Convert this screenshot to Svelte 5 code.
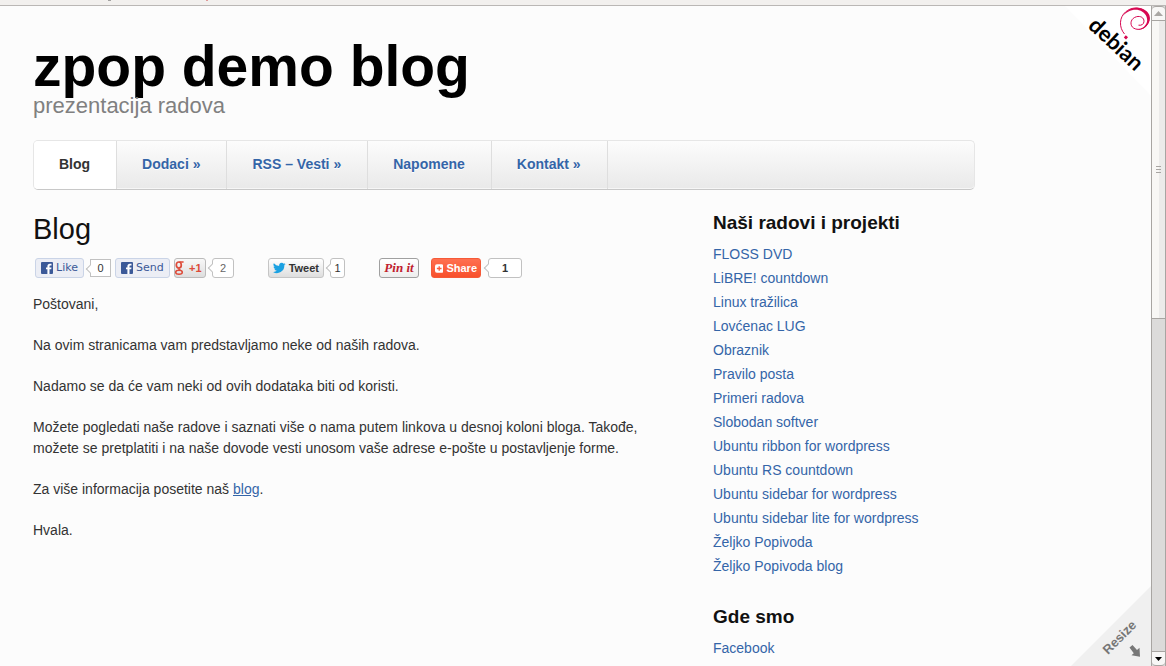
<script>
  const menu = [
    { label: 'Blog', current: true },
    { label: 'Dodaci »' },
    { label: 'RSS – Vesti »' },
    { label: 'Napomene' },
    { label: 'Kontakt »' }
  ];

  const projects = [
    'FLOSS DVD',
    'LiBRE! countdown',
    'Linux tražilica',
    'Lovćenac LUG',
    'Obraznik',
    'Pravilo posta',
    'Primeri radova',
    'Slobodan softver',
    'Ubuntu ribbon for wordpress',
    'Ubuntu RS countdown',
    'Ubuntu sidebar for wordpress',
    'Ubuntu sidebar lite for wordpress',
    'Željko Popivoda',
    'Željko Popivoda blog'
  ];
</script>

{#snippet facebook()}
  <svg width="12" height="12" viewBox="0 0 12 12" aria-hidden="true">
    <rect width="12" height="12" rx="1" fill="#3b5998" />
    <path d="M6.4 12V7.3H5V5.4h1.4V4.2C6.4 2.6 7.3 1.7 8.9 1.7h1.6v1.8H9.4c-.7 0-.9.3-.9.9v1h2l-.3 1.9H8.5V12z" fill="#fff" />
  </svg>
{/snippet}

<div class="window">
  <div class="toolbar">
    <svg width="210" height="5" aria-hidden="true">
      <path d="M108 0h3" stroke="#555" />
      <path d="M206 0h2" stroke="#c44" />
    </svg>
  </div>

  <div class="view">
    <div class="page">
      <div class="container">
        <header>
          <h1>zpop demo blog</h1>
          <p class="tagline">prezentacija radova</p>
        </header>

        <nav>
          {#each menu as item}
            <a href="#top" class:current={item.current}>{item.label}</a>
          {/each}
        </nav>

        <div class="columns">
          <main>
            <h2>Blog</h2>

            <div class="share">
              <div class="group">
                <button class="fb like">{@render facebook()}Like</button>
                <span class="count square">0</span>
              </div>
              <button class="fb send">{@render facebook()}Send</button>
              <div class="group plus-group">
                <button class="plus">
                  <svg width="10" height="16" viewBox="0 0 10 16" fill="none" stroke="#dd4b39" aria-hidden="true">
                    <ellipse cx="3.8" cy="5" rx="2.5" ry="3" stroke-width="1.7" />
                    <path d="M4.4 2h4.2M4.6 8C3 9 4 9.6 5.6 10.4" stroke-width="1.3" />
                    <ellipse cx="4" cy="12.2" rx="3.3" ry="2" stroke-width="1.5" />
                  </svg>
                  +1
                </button>
                <span class="count wide">2</span>
              </div>
              <div class="group tweet-group">
                <button class="tweet">
                  <svg width="14" height="12" viewBox="0 0 24 20" aria-hidden="true">
                    <path d="M24 2.4a10 10 0 0 1-2.8.8A5 5 0 0 0 23.3.5a10 10 0 0 1-3.1 1.2A4.9 4.9 0 0 0 11.8 6.2 14 14 0 0 1 1.7 1a4.9 4.9 0 0 0 1.5 6.6A5 5 0 0 1 1 7a4.9 4.9 0 0 0 3.9 4.9 5 5 0 0 1-2.2.1 4.9 4.9 0 0 0 4.6 3.4A9.9 9.9 0 0 1 0 17.5 14 14 0 0 0 21.5 5 10 10 0 0 0 24 2.4z" fill="#1ba1e2" />
                  </svg>
                  Tweet
                </button>
                <span class="count">1</span>
              </div>
              <button class="pin">Pin it</button>
              <div class="group share-group">
                <button class="addthis">
                  <svg width="9" height="9" viewBox="0 0 9 9" aria-hidden="true">
                    <rect width="9" height="9" rx="2" fill="#fff" />
                    <path d="M4.5 2v5M2 4.5h5" stroke="#fc5a3c" stroke-width="1.4" />
                  </svg>
                  Share
                </button>
                <span class="count total">1</span>
              </div>
            </div>

            <div class="entry">
              <p>Poštovani,</p>
              <p>Na ovim stranicama vam predstavljamo neke od naših radova.</p>
              <p>Nadamo se da će vam neki od ovih dodataka biti od koristi.</p>
              <p>
                Možete pogledati naše radove i saznati više o nama putem linkova u desnoj koloni bloga. Takođe,
                možete se pretplatiti i na naše dovode vesti unosom vaše adrese e-pošte u postavljenje forme.
              </p>
              <p>Za više informacija posetite naš <a href="#blog">blog</a>.</p>
              <p>Hvala.</p>
            </div>
          </main>

          <aside>
            <section>
              <h3>Naši radovi i projekti</h3>
              <ul>
                {#each projects as name}
                  <li><a href="#projekti">{name}</a></li>
                {/each}
              </ul>
            </section>
            <section>
              <h3>Gde smo</h3>
              <ul>
                <li><a href="#facebook">Facebook</a></li>
              </ul>
            </section>
          </aside>
        </div>
      </div>

      <a class="debian" href="#debian" aria-label="debian">
        <svg width="86" height="90" viewBox="0 0 86 90">
          <path d="M0 0h86v90z" fill="#fff" />
          <text x="0" y="0" transform="translate(22 21) rotate(43)" class="debian-name">debian</text>
          <path d="M60.8 29.2l2.2 2-2 2.2-2.2-2z" fill="#d70751" />
          <path
            d="M59.500 28C53.500 21 54.500 11 60.500 6 66 1.200 73.500.800 78.500 4.200c6 4 7 11 2.500 16-4 4-10.500 4-13.500 1-3-3.500-1.500-9 4-10.500 4-1 7.500 1 7.500 4.500 0 3-2.500 4.500-5.500 4"
            fill="none" stroke="#d70751" stroke-width="1" />
          <path d="M57 11C61 3.500 69 .200 76 2.200c8 2.500 11 9 7.500 15-2.500 4.500-6.500 6.500-11 6.500 5-1 8.500-4 9.500-8 1-5-2.500-10-8-11.500C68 2.800 61 5.500 57 11z" fill="#d70751" />
        </svg>
      </a>

      <button class="resize" aria-label="Resize">
        <svg width="80" height="80" viewBox="0 0 80 80">
          <path d="M80 0v80H0z" fill="#f0f0f0" />
          <text x="0" y="0" transform="translate(37 69) rotate(-45)" class="resize-name">Resize</text>
          <path d="M58.500 61.500l3-2.500 4.500 5 2.500-2.300.500 9-8.500-1.500 2.300-2z" fill="#777" />
        </svg>
      </button>
    </div>

    <div class="scrollbar" aria-hidden="true">
      <div class="arrow">
        <svg width="9" height="5"><path d="M0 5l4.500-5L9 5z" fill="#aaa7a4" /></svg>
      </div>
      <div class="thumb"><i></i><i></i><i></i></div>
      <div class="track"></div>
      <div class="arrow down">
        <svg width="7" height="4"><path d="M0 0h7L3.500 4z" fill="#000" /></svg>
      </div>
    </div>
  </div>
</div>

<style>
  :global(body) {
    margin: 0;
    overflow: hidden;
    background: #fcfcfc;
  }

  .window {
    display: flex;
    flex-direction: column;
    height: 100vh;
    font: 14px/21px "Liberation Sans", Arial, sans-serif;
    color: #333;
  }

  .toolbar {
    flex: none;
    height: 5px;
    background: #f2f0ee;
    border-bottom: 1px solid #bab7b5;
  }

  .toolbar svg {
    display: block;
  }

  .view {
    display: flex;
    flex: 1;
    min-height: 0;
  }

  .page {
    position: relative;
    flex: 1;
    overflow: hidden;
    background: #fcfcfc;
  }

  .container {
    max-width: 942px;
    padding: 31px 33px 0;
  }

  h1, h2, h3, p, ul {
    margin: 0;
    padding: 0;
  }

  h1 {
    font-size: 57px;
    line-height: 58px;
    color: #000;
  }

  .tagline {
    font-size: 22px;
    line-height: 22px;
    color: #808080;
  }

  nav {
    display: flex;
    height: 48px;
    margin-top: 23px;
    overflow: hidden;
    border: 1px solid #e6e6e6;
    border-bottom-color: #c8c8c8;
    border-radius: 5px;
    background: linear-gradient(#fcfcfc, #e9e9e9);
    box-shadow: inset 0 -1px #f6f6f6;
  }

  nav a {
    padding: 0 26px 0 25px;
    border-right: 1px solid #dedede;
    font-weight: bold;
    line-height: 46px;
    color: #3465a8;
    text-decoration: none;
    text-shadow: 0 1px #fff;
  }

  nav .current {
    background: #fff;
    color: #333;
  }

  .columns {
    display: grid;
    grid-template-columns: minmax(0, 1fr) 262px;
    gap: 50px;
    margin-top: 22px;
  }

  h2 {
    font-size: 29px;
    font-weight: normal;
    line-height: 34px;
    color: #111;
  }

  .share {
    display: flex;
    gap: 4px;
    margin: 12px 0 16px;
    padding-left: 2px;
  }

  .group {
    display: flex;
    align-items: flex-start;
    gap: 6px;
  }

  .plus-group {
    width: 90px;
  }

  .tweet-group {
    width: 107px;
  }

  .share-group {
    margin-left: 8px;
    gap: 7px;
  }

  .share button {
    display: flex;
    align-items: center;
    box-sizing: border-box;
    height: 20px;
    padding: 0 4px;
    gap: 3px;
    border: 1px solid #c5c5c5;
    border-radius: 3px;
    font: bold 11px/18px "Liberation Sans", Arial, sans-serif;
    white-space: nowrap;
  }

  .share .fb {
    padding: 0 5px;
    border-color: #cad4e7;
    background: #eceef5;
    font-family: "DejaVu Sans", sans-serif;
    font-weight: normal;
    color: #3b5998;
  }

  .share .like {
    width: 49px;
  }

  .share .send {
    width: 55px;
  }

  .share .plus {
    width: 32px;
    padding: 0;
    gap: 4px;
    background: linear-gradient(#f8f8f8, #dedede);
    border-color: #bbb;
    color: #dd4b39;
  }

  .share .tweet {
    width: 56px;
    background: linear-gradient(#fff, #dedede);
    color: #333;
  }

  .share .pin {
    width: 40px;
    justify-content: center;
    padding: 0;
    background: linear-gradient(#fff, #eee);
    border-color: #a0a0a0;
    font: italic bold 13px/18px "Liberation Serif", serif;
    color: #c0202d;
  }

  .share .addthis {
    width: 50px;
    padding: 0 3px;
    background: linear-gradient(#ff7050, #f8502c);
    border-color: #f55a38;
    color: #fff;
  }

  .count {
    position: relative;
    box-sizing: border-box;
    min-width: 15px;
    height: 20px;
    border: 1px solid #c1c1c1;
    border-radius: 3px;
    background: #fff;
    font-size: 11px;
    line-height: 18px;
    text-align: center;
  }

  .count::before {
    content: "";
    position: absolute;
    top: 6px;
    left: -4px;
    width: 5px;
    height: 5px;
    border: solid #c1c1c1;
    border-width: 0 0 1px 1px;
    background: #fff;
    transform: rotate(45deg);
  }

  .square {
    width: 21px;
    height: 18px;
    margin-top: 1px;
    border-radius: 0;
    line-height: 16px;
  }

  .wide {
    width: 22px;
    color: #666;
  }

  .total {
    width: 34px;
    font-weight: bold;
  }

  .entry p {
    margin-bottom: 20px;
  }

  a {
    color: #3465a8;
  }

  h3 {
    margin-bottom: 8px;
    font-size: 19px;
    line-height: 22px;
    color: #111;
  }

  section {
    margin-bottom: 28px;
  }

  ul {
    list-style: none;
    line-height: 24px;
  }

  li a {
    text-decoration: none;
  }

  .debian {
    position: absolute;
    top: 0;
    right: 0;
  }

  .resize {
    position: absolute;
    right: 0;
    bottom: 0;
    padding: 0;
    border: 0;
    background: none;
  }

  .debian svg,
  .resize svg {
    display: block;
  }

  .debian-name {
    font: bold 22px Lato, sans-serif;
    fill: #000;
  }

  .resize-name {
    font: bold 13px "Liberation Sans", sans-serif;
    fill: #777;
  }

  .scrollbar {
    display: flex;
    flex-direction: column;
    flex: none;
    width: 13px;
    border: solid #a8a5a2;
    border-width: 0 1px;
    background: #dcdbda;
  }

  .arrow {
    display: flex;
    align-items: center;
    justify-content: center;
    height: 13px;
    border: solid #a8a5a2;
    border-width: 1px 0;
    border-radius: 4px 4px 0 0;
    background: #f8f7f6;
  }

  .down {
    border-radius: 0 0 4px 4px;
  }

  .thumb {
    display: flex;
    flex-direction: column;
    align-items: center;
    justify-content: center;
    gap: 2px;
    flex: 297;
    border-bottom: 1px solid #a8a5a2;
    background: linear-gradient(90deg, #f8f7f5 50%, #ecebea 50%);
  }

  .thumb i {
    width: 5px;
    height: 1px;
    background: #a8a5a2;
  }

  .track {
    flex: 332;
  }
</style>
